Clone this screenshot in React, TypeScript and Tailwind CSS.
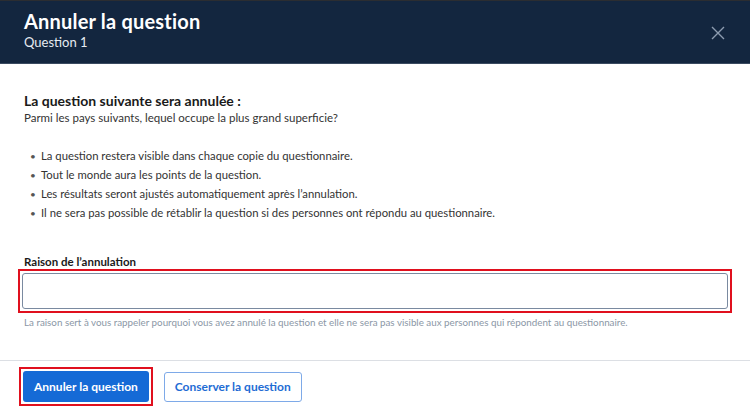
import React from "react";

export default function App() {
  const items = [
    "La question restera visible dans chaque copie du questionnaire.",
    "Tout le monde aura les points de la question.",
    "Les résultats seront ajustés automatiquement après l’annulation.",
    "Il ne sera pas possible de rétablir la question si des personnes ont répondu au questionnaire.",
  ];
  return (
    <div className="w-[750px] h-[419px] bg-white flex flex-col overflow-hidden font-['Lato',sans-serif]">
      <div className="h-[64px] bg-[#13263f] border-t border-[#2b2d31] border-b border-b-[#3a4a60] flex items-start justify-between pl-[24px] pr-[24px]">
        <div className="flex flex-col pt-[7px]">
          <div className="text-white font-bold text-[20px] leading-[26px] tracking-[0.2px]">Annuler la question</div>
          <div className="text-[#e6ebf1] text-[13px] leading-[17px]">Question 1</div>
        </div>
        <svg className="mt-[25px] mr-[1px]" width="14" height="14" viewBox="0 0 14 14" fill="none">
          <path d="M1 1L13 13M13 1L1 13" stroke="#8d9cb0" strokeWidth="1.4" />
        </svg>
      </div>
      <div className="flex flex-col px-[24px] pt-[28px]">
        <div className="text-[#1a1a1a] font-bold text-[14px] leading-[18px]">La question suivante sera annulée :</div>
        <div className="text-[#333] text-[11.5px] leading-[16px]">Parmi les pays suivants, lequel occupe la plus grand superficie?</div>
        <ul className="mt-[22px] flex flex-col gap-[3px] pl-[6px]">
          {items.map((t) => (
            <li key={t} className="flex items-center text-[11.3px] leading-[16px] text-[#333]">
              <span className="w-[11px] text-[#555] text-[10px]">•</span>
              <span>{t}</span>
            </li>
          ))}
        </ul>
        <div className="mt-[33px] font-bold text-[11.5px] leading-[15px] text-[#1a1a1a]">Raison de l’annulation</div>
        <div className="mt-0 -mx-[6px] border-[2px] border-[#e0101e] p-[2px]">
          <input className="block w-full h-[36px] border border-[#7a8aa0] rounded-[3px] outline-none" />
        </div>
        <div className="mt-[3px] text-[9.8px] leading-[12px] text-[#8b97a6]">
          La raison sert à vous rappeler pourquoi vous avez annulé la question et elle ne sera pas visible aux personnes qui répondent au questionnaire.
        </div>
      </div>
      <div className="mt-[32px] border-t border-[#dcdfe4] flex items-center gap-[11px] px-[19px] pt-[6px]">
        <div className="border-[2px] border-[#e0101e] p-[2px]">
          <button className="h-[31px] px-[11px] bg-[#156ad6] text-white font-bold text-[12px] rounded-[3px]">Annuler la question</button>
        </div>
        <button className="h-[30px] px-[10px] border border-[#7eaae8] text-[#1e6cd4] bg-white font-bold text-[12px] rounded-[3px]">Conserver la question</button>
      </div>
    </div>
  );
}
